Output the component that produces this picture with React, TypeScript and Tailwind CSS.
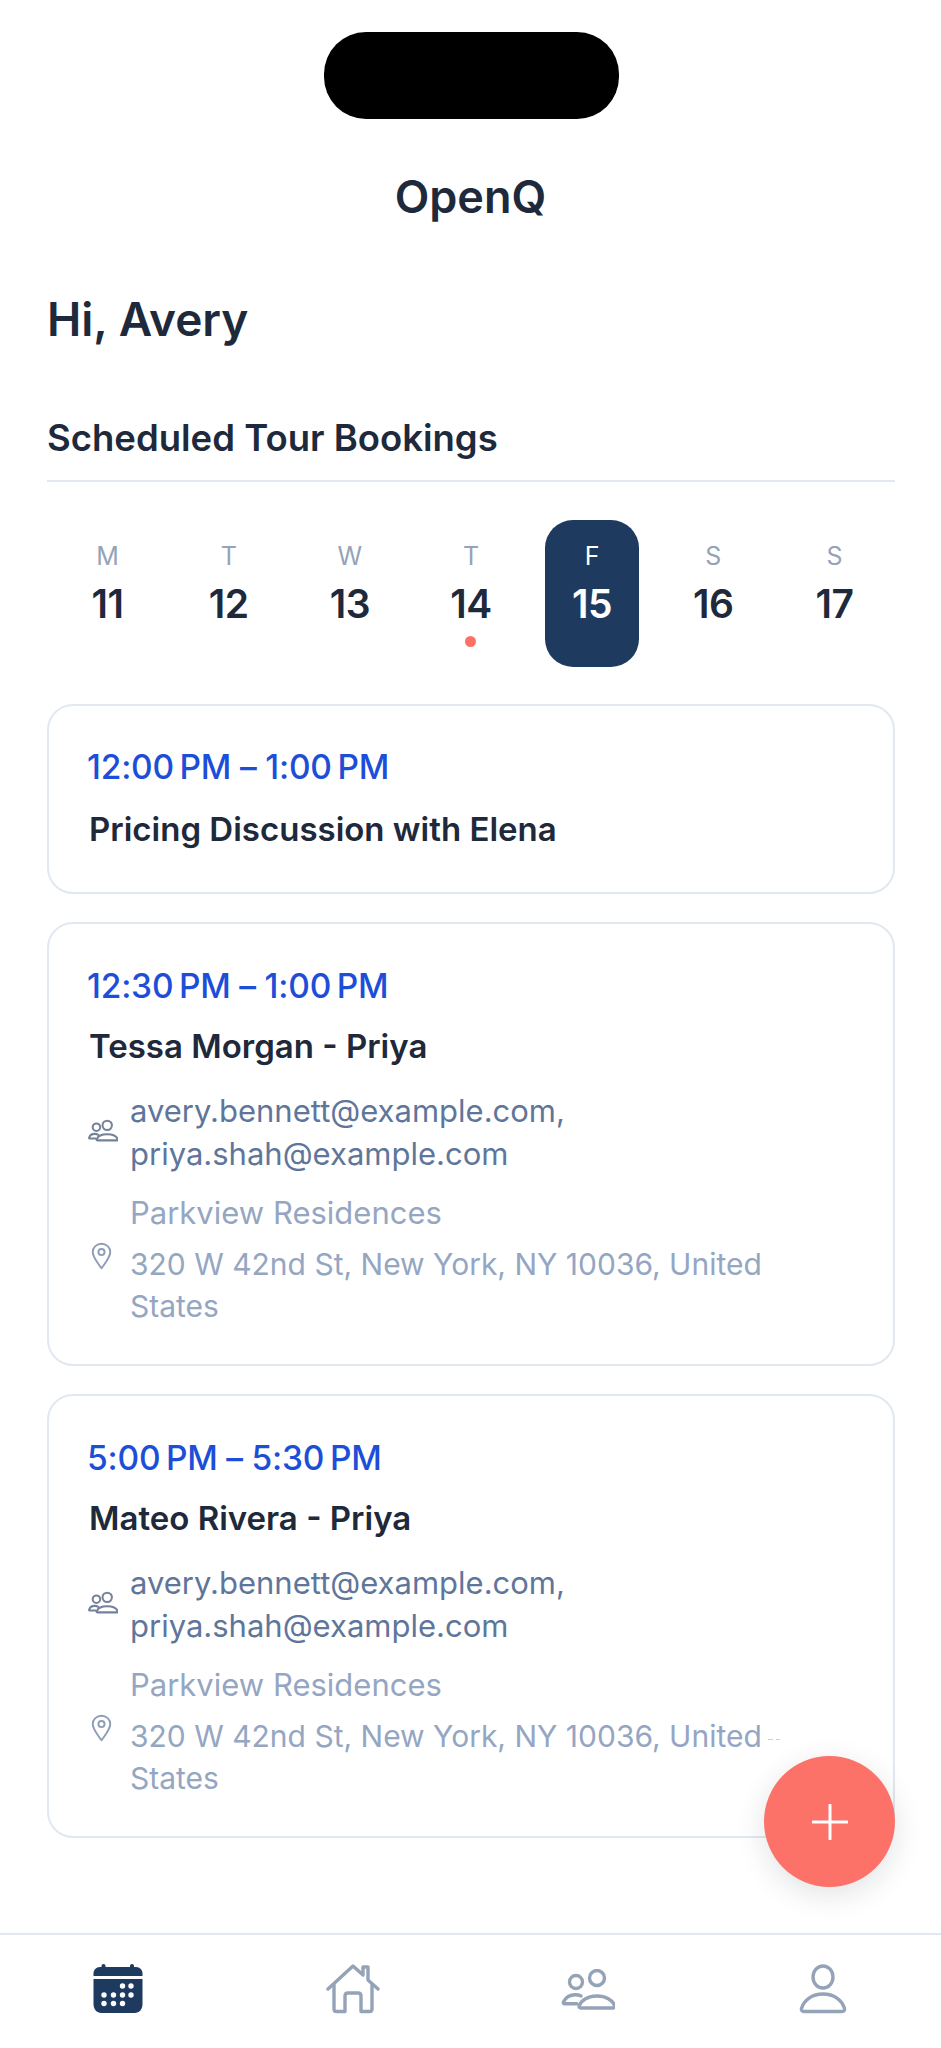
import React from "react";

const days = [
  { d: "M", n: 11 },
  { d: "T", n: 12 },
  { d: "W", n: 13 },
  { d: "T", n: 14, dot: true },
  { d: "F", n: 15, active: true },
  { d: "S", n: 16 },
  { d: "S", n: 17 },
];

const bookings = [
  { time: "12:30\u2009PM – 1:00\u2009PM", title: "Tessa Morgan - Priya" },
  { time: "5:00\u2009PM – 5:30\u2009PM", title: "Mateo Rivera - Priya" },
];

function PeopleIcon({ className }: { className: string }) {
  return (
    <svg viewBox="0 0 32 24" fill="none" stroke="currentColor" strokeWidth="2.200" strokeLinecap="round" strokeLinejoin="round" className={className}>
      <circle cx="9" cy="8.5" r="4" />
      <circle cx="20.5" cy="6.5" r="5" />
      <path d="M11 16.6c-1-.6-2.400-1-4-1-3 0-5.200 1.700-5.800 4.200-.1.500.1.700.6.700H8" />
      <path d="M10 22.500c-.6 0-.9-.4-.7-.9 1-3.400 5.200-5.600 11.200-5.600s10.200 2.200 11.200 5.600c.2.500-.1.900-.7.900z" />
    </svg>
  );
}

function PinIcon() {
  return (
    <svg viewBox="0 0 24 32" fill="none" stroke="currentColor" strokeWidth="2.200" strokeLinejoin="round" className="w-[21px] h-[28px] ml-[3px] text-[#8e9db5]">
      <path d="M12 30C7 23 2 17.500 2 11.500 2 6 6.500 2 12 2s10 4 10 9.500C22 17.500 17 23 12 30z" />
      <circle cx="12" cy="11.500" r="3.500" />
    </svg>
  );
}

function BookingCard({ time, title }: { time: string; title: string }) {
  return (
    <div className="border-2 border-[#e2e8f0] rounded-[26px] pl-[38px] pr-[40px] pt-[43px] pb-[37px]">
      <div className="text-[33.500px] leading-[38px] font-medium text-[#1d4ed8] tracking-[-0.2px]">{time}</div>
      <div className="text-[33px] leading-[40px] font-semibold text-[#1e293b] mt-[21px] pl-[2px]">{title}</div>
      <div className="flex items-center mt-[23px] pl-[1px]">
        <PeopleIcon className="w-[30px] h-[23px] text-[#74829a] mr-[12px] shrink-0 mb-[4px]" />
        <div className="text-[31px] leading-[43px] text-[#5f769b]">
          avery.bennett@example.com,
          <br />
          priya.shah@example.com
        </div>
      </div>
      <div className="flex mt-[17px] pl-[1px]">
        <div className="w-[42px] shrink-0 pt-[50px]">
          <PinIcon />
        </div>
        <div className="text-[30px] text-[#94a6c2]">
          <div className="leading-[42px] text-[31px]">Parkview Residences</div>
          <div className="leading-[42px] mt-[9px]">320 W 42nd St, New York, NY 10036, United States</div>
        </div>
      </div>
    </div>
  );
}

export default function App() {
  return (
    <div className="relative w-[941px] h-[2048px] bg-white overflow-hidden font-['Inter',sans-serif] text-[#1e293b]">
      <div className="flex justify-center pt-[32px]">
        <div className="w-[295px] h-[87px] ml-[2px] bg-black rounded-[42px]" />
      </div>
      <h1 className="text-center text-[45px] leading-[56px] font-semibold mt-[50px]">OpenQ</h1>
      <div className="pl-[47px] pr-[46px]">
        <h2 className="text-[46px] leading-[56px] font-semibold mt-[66px]">Hi, Avery</h2>
        <div className="text-[36.500px] leading-[44px] font-semibold mt-[69px] pb-[20px] border-b-2 border-[#e2e8f0]">
          Scheduled Tour Bookings
        </div>
        <div className="grid grid-cols-7 mt-[38px]">
          {days.map((day, i) => (
            <div key={i} className="flex justify-center">
              <div className={"relative w-[94px] h-[147px] rounded-[28px] flex flex-col items-center pt-[19px] " + (day.active ? "bg-[#1e3a5f] text-white" : "")}>
                <div className={"text-[25px] leading-[34px] " + (day.active ? "text-white" : "text-[#94a3b8]")}>{day.d}</div>
                <div className="text-[39px] leading-[46px] font-semibold mt-[8px] tracking-[-0.5px]">{day.n}</div>
                {day.dot && <div className="w-[11px] h-[11px] rounded-full bg-[#fb7168] mt-[9px]" />}
              </div>
            </div>
          ))}
        </div>
        <div className="mt-[37px] flex flex-col gap-[28px]">
          <div className="border-2 border-[#e2e8f0] rounded-[26px] h-[190px] pl-[38px] pt-[42px]">
            <div className="text-[33.500px] leading-[38px] font-medium text-[#1d4ed8] tracking-[-0.2px]">12:00{"\u2009"}PM – 1:00{"\u2009"}PM</div>
            <div className="text-[33px] leading-[40px] font-semibold mt-[23px] pl-[2px]">Pricing Discussion with Elena</div>
          </div>
          {bookings.map((b) => (
            <BookingCard key={b.title} time={b.time} title={b.title} />
          ))}
        </div>
      </div>

      {/* white patch the fab sits on */}
      <div className="absolute left-[761px] top-[1740px] w-[60px] h-[66px] bg-white" />
      <div className="absolute left-[768px] top-[1739px] w-[5px] h-[1px] bg-[#c5d0e0]" />
      <div className="absolute left-[776px] top-[1739px] w-[4px] h-[1px] bg-[#c5d0e0]" />
      <button className="absolute left-[764px] top-[1756px] w-[131px] h-[131px] rounded-full bg-[#fc7168] flex items-center justify-center shadow-[0_8px_30px_rgba(15,23,42,0.12)]">
        <svg viewBox="0 0 36 36" className="w-[36px] h-[36px]" fill="none" stroke="white" strokeWidth="3" strokeLinecap="round">
          <path d="M18 1v34M1 18h34" />
        </svg>
      </button>

      <nav className="absolute left-0 right-0 bottom-0 h-[115px] border-t-2 border-[#e2e8f0] grid grid-cols-4 bg-white">
        <div className="flex justify-center pt-[29px]">
          <svg viewBox="0 0 50 50" className="w-[50px] h-[50px]">
            <rect x="8.500" y="0" width="4" height="8" rx="2" fill="#1e3a5f" />
            <rect x="37" y="0" width="4" height="8" rx="2" fill="#1e3a5f" />
            <path d="M0.500 12V9.500C0.500 6 3 3 7 3h36c4 0 6.500 3 6.500 6.500V12z" fill="#1e3a5f" />
            <path d="M0.500 15h49v25c0 5-3 9-8 9h-33c-5 0-8-4-8-9z" fill="#1e3a5f" />
            {[[29.500,22],[38,22],[11,31],[20.500,31],[29.500,31],[38,31],[11,39.500],[20.500,39.500],[29.500,39.500]].map(([cx, cy]) => (
              <circle key={cx + "-" + cy} cx={cx} cy={cy} r="2.700" fill="white" />
            ))}
          </svg>
        </div>
        <div className="flex justify-center pt-[29px] text-[#94a3b8]">
          <svg viewBox="0 0 54 50" className="w-[54px] h-[50px]" fill="none" stroke="currentColor" strokeWidth="3.400" strokeLinecap="round" strokeLinejoin="round">
            <path d="M2 25 27 2l10 9V3h5v13l10 9" />
            <path d="M8 21v24c0 1.500.8 2.500 2.500 2.500H19V32c0-2 1-3 3-3h10c2 0 3 1 3 3v15.500h8.500c1.700 0 2.500-1 2.500-2.500V21" />
          </svg>
        </div>
        <div className="flex justify-center pt-[29px] text-[#94a3b8]">
          <svg viewBox="0 0 54 44" className="w-[54px] h-[44px] mt-[5px]" fill="none" stroke="currentColor" strokeWidth="3.400" strokeLinecap="round" strokeLinejoin="round">
            <circle cx="15" cy="13" r="6.500" />
            <circle cx="36" cy="9" r="7.500" />
            <path d="M20 27c-2-1-3.500-1.300-5.500-1.300-6 0-10 3-12 7-.5 1.300 0 2 1.300 2h12" />
            <path d="M20 39c-1.700 0-2.300-1-1.700-2.500C20.500 31 27 27 36 27s15.500 4 17.500 9.500c.6 1.500-.2 2.500-1.700 2.500z" />
          </svg>
        </div>
        <div className="flex justify-center pt-[29px] text-[#94a3b8]">
          <svg viewBox="0 0 48 50" className="w-[48px] h-[50px]" fill="none" stroke="currentColor" strokeWidth="3.400" strokeLinecap="round" strokeLinejoin="round">
            <ellipse cx="24" cy="13" rx="10" ry="11" />
            <path d="M5 47.500c-2 0-3-1-2.500-3C5 36 13 30 24 30s19 6 21.500 14.500c.5 2-.5 3-2.500 3z" />
          </svg>
        </div>
      </nav>
    </div>
  );
}
